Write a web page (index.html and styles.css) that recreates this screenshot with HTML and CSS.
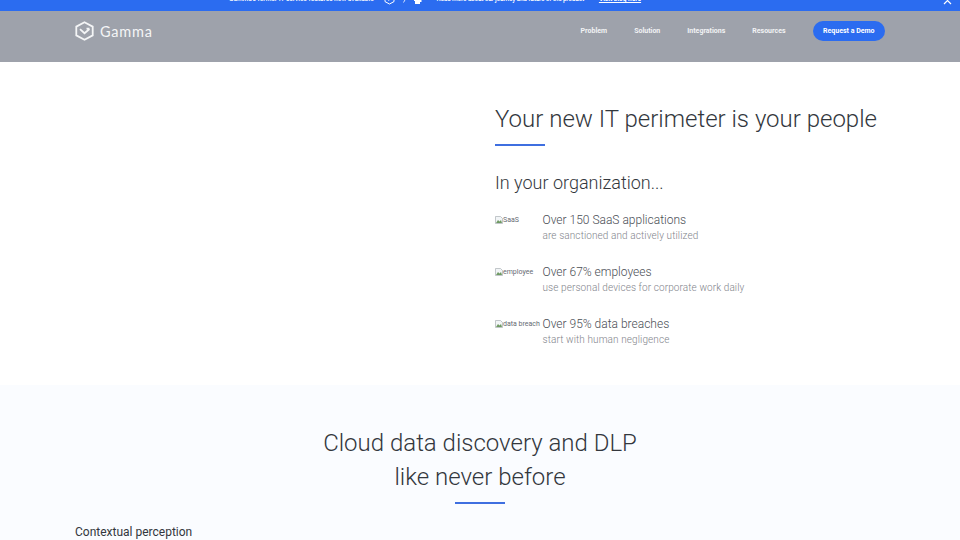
FILE: index.html
```html
<!DOCTYPE html>
<html lang="en">
<head>
    <meta charset="UTF-8">
    <meta name="viewport" content="width=device-width, initial-scale=1.0">
    <title>Gamma - Cloud data discovery and DLP</title>
    <link rel="stylesheet" href="styles.css">
</head>
<body>
    <div class="banner">
        <div class="banner-inner">
            <span class="banner-text">Gamma's former IT service features now available</span>
            <svg class="banner-shield" width="11" height="12" viewBox="0 0 11 12"><path d="M5.5 1 10 3.2v5.4L5.5 11 1 8.6V3.2z" fill="none" stroke="#fff" stroke-width="1"/><path d="M3.5 6 5 7.4 7.6 4.8" fill="none" stroke="#fff" stroke-width="1"/></svg>
            <svg class="banner-slash" width="5" height="8" viewBox="0 0 5 8"><path d="M4.5 .5.5 7.5" stroke="#fff" stroke-width=".8"/></svg>
            <svg class="banner-puzzle" width="11" height="12" viewBox="0 0 11 12"><path d="M1 4h3V2h3v2h3v3H8.500v2H7v2H2V8H1z" fill="#fff"/></svg>
            <span class="banner-text banner-read">Read more about our journey and future of the product</span>
            <a class="banner-link" href="#">Visit blog here</a>
        </div>
        <svg class="banner-close" width="9" height="9" viewBox="0 0 9 9"><path d="M1 1l7 7M8 1 1 8" stroke="#fff" stroke-width="1.200"/></svg>
    </div>

    <header class="topbar">
        <a class="logo" href="#">
            <svg width="19" height="20" viewBox="0 0 19 20"><path d="M9.500 1.200 17.700 5.600v8.800L9.500 18.800 1.300 14.400V5.600z" fill="none" stroke="#f4f5f6" stroke-width="1.800"/><path d="M14.500 7.600h-3M5 8.200 9.500 12.200l5-4.200" fill="none" stroke="#f4f5f6" stroke-width="1.800"/></svg>
            <span class="logo-name">Gamma</span>
        </a>
        <nav class="nav">
            <a href="#">Problem</a>
            <a href="#">Solution</a>
            <a href="#">Integrations</a>
            <a href="#">Resources</a>
            <a class="demo-btn" href="#">Request a Demo</a>
        </nav>
    </header>

    <section class="hero">
        <div class="hero-side"></div>
        <div class="hero-main">
            <h1>Your new IT perimeter is your people</h1>
            <div class="rule"></div>
            <h2>In your organization...</h2>
            <div class="stat">
                <span class="broken"><svg width="8" height="8" viewBox="0 0 8 8"><path d="M.5.5h5l2 2v5h-7z" fill="#f2f5f7" stroke="#aab0b5" stroke-width=".7"/><path d="M1 7l2-3 1.500 1.500L6 4l1 3z" fill="#6f9a63"/></svg>SaaS</span>
                <div>
                    <p class="stat-title">Over 150 SaaS applications</p>
                    <p class="stat-sub">are sanctioned and actively utilized</p>
                </div>
            </div>
            <div class="stat">
                <span class="broken"><svg width="8" height="8" viewBox="0 0 8 8"><path d="M.5.5h5l2 2v5h-7z" fill="#f2f5f7" stroke="#aab0b5" stroke-width=".7"/><path d="M1 7l2-3 1.500 1.500L6 4l1 3z" fill="#6f9a63"/></svg>employee</span>
                <div>
                    <p class="stat-title">Over 67% employees</p>
                    <p class="stat-sub">use personal devices for corporate work daily</p>
                </div>
            </div>
            <div class="stat">
                <span class="broken"><svg width="8" height="8" viewBox="0 0 8 8"><path d="M.5.5h5l2 2v5h-7z" fill="#f2f5f7" stroke="#aab0b5" stroke-width=".7"/><path d="M1 7l2-3 1.500 1.500L6 4l1 3z" fill="#6f9a63"/></svg>data breach</span>
                <div>
                    <p class="stat-title">Over 95% data breaches</p>
                    <p class="stat-sub">start with human negligence</p>
                </div>
            </div>
        </div>
    </section>

    <section class="discovery">
        <h2 class="discovery-title">Cloud data discovery and DLP<br>like never before</h2>
        <div class="rule rule-center"></div>
        <p class="discovery-label">Contextual perception</p>
    </section>
</body>
</html>
```

FILE: styles.css
```css
html, body {
    height: 540px;
    overflow: hidden;
}
body {
    margin: 0;
    font-family: Roboto, "Liberation Sans", sans-serif;
    background-color: white;
    color: #33373d;
}
p, h1, h2 {
    margin: 0;
    font-weight: 300;
}
a {
    color: inherit;
    text-decoration: none;
}
.banner {
    height: 11px;
    background-color: #2b6cf0;
    display: flex;
    align-items: flex-end;
    overflow: hidden;
    color: white;
    font-size: 6.500px;
    font-weight: 500;
    padding-left: 229px;
}
.banner-inner {
    display: flex;
    align-items: center;
    height: 14px;
    margin-bottom: 5px;
    white-space: nowrap;
}
.banner-shield {
    margin-left: 10px;
}
.banner-slash {
    margin-left: 8px;
}
.banner-puzzle {
    margin-left: 5px;
}
.banner-read {
    margin-left: 13px;
    letter-spacing: -.2px;
}
.banner-link {
    margin-left: 15px;
    text-decoration: underline;
    font-weight: 700;
}
.banner-close {
    position: absolute;
    right: 8px;
    top: -4px;
}
.topbar {
    height: 51px;
    background-color: #9ea2ab;
    display: flex;
    align-items: flex-start;
    justify-content: space-between;
    padding: 10px 75px 0;
    box-sizing: border-box;
}
.logo {
    display: flex;
    align-items: center;
    gap: 6px;
    color: #f4f5f6;
}
.logo-name {
    font-family: Lato, sans-serif;
    font-size: 14.500px;
    letter-spacing: .8px;
}
.nav {
    display: flex;
    align-items: center;
    gap: 27px;
    font-size: 7px;
    font-weight: 700;
    color: #f2f3f5;
}
.demo-btn {
    background-color: #2b6cf0;
    color: white;
    padding: 0 10.500px;
    height: 20px;
    line-height: 20px;
    border-radius: 10px;
}
.hero {
    height: 323px;
    display: flex;
    padding: 0 75px;
}
.hero-side {
    width: 420px;
}
.hero-main {
    flex: 1;
    padding-top: 41px;
}
h1 {
    font-size: 24px;
    line-height: 32px;
    white-space: nowrap;
}
.rule {
    width: 50px;
    height: 2px;
    background-color: #3f6fe0;
    margin-top: 9px;
}
.hero-main h2 {
    font-size: 18px;
    line-height: 24px;
    margin-top: 25px;
    margin-bottom: 17px;
}
.stat {
    display: flex;
    height: 51.800px;
}
.broken {
    width: 47.500px;
    flex: none;
    display: flex;
    align-items: flex-start;
    font-size: 7px;
    line-height: 8px;
    color: #666b72;
    padding-top: 4px;
    white-space: nowrap;
}
.stat-title {
    font-size: 12px;
    line-height: 17px;
    color: #4a4e55;
}
.stat-sub {
    font-size: 10px;
    line-height: 14px;
    color: #7f848b;
    letter-spacing: .1px;
}
.discovery {
    height: 155px;
    background-color: #fafcff;
    padding: 41px 75px 0;
    box-sizing: border-box;
}
.discovery-title {
    font-size: 24px;
    line-height: 34px;
    text-align: center;
}
.rule-center {
    margin: 8px auto 0;
}
.discovery-label {
    font-size: 12px;
    font-weight: 400;
    line-height: 16px;
    margin-top: 20px;
}
```
